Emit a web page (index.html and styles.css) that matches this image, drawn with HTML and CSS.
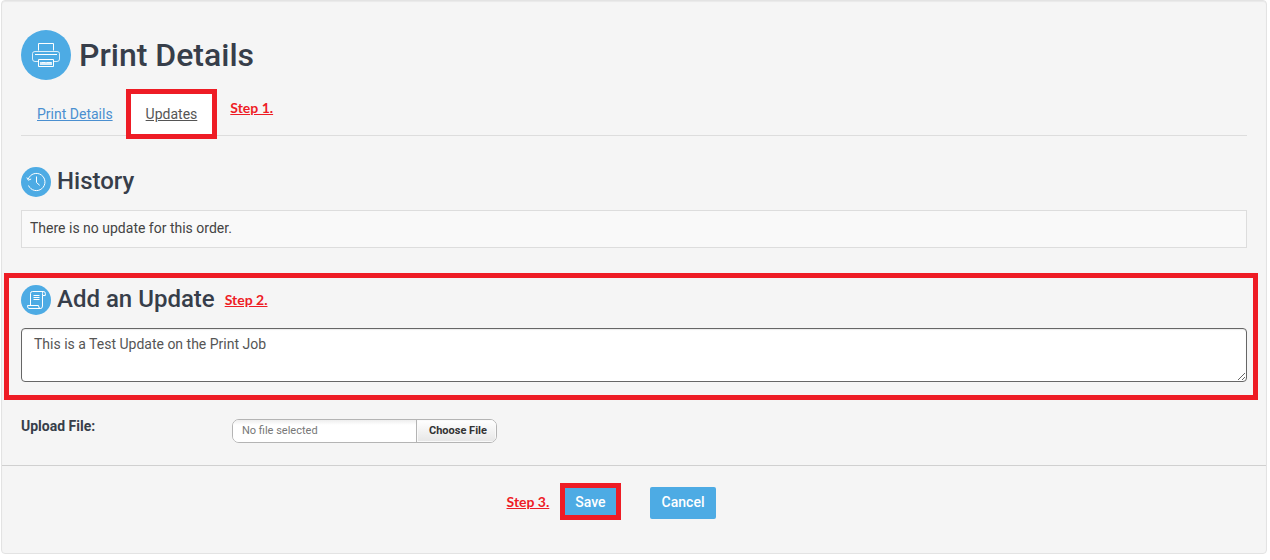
FILE: index.html
```html
<!DOCTYPE html>
<html lang="en">
<head>
<meta charset="utf-8">
<title>Print Details</title>
<link rel="stylesheet" href="styles.css">
</head>
<body>
<form class="panel">
  <div class="panel-body">
    <header class="page-head">
      <svg class="icon-large" viewBox="0 0 50 50" aria-hidden="true">
        <circle class="disc" cx="25" cy="25" r="25"/>
        <g class="lines">
          <path d="M17.500 20.500V13.500H32.500V20.500"/>
          <path class="soft" d="M17.500 31.500H14Q11.500 31.500 11.500 29V23.500Q11.500 21.500 14 21.500H36Q38.500 21.500 38.500 23.500V29Q38.500 31.500 36 31.500H32.500"/>
          <path d="M14 24.500H36"/>
          <path d="M17.500 29.500H32.500V36.500H17.500Z"/>
          <path class="thick" d="M19 33.500H31"/>
          <path class="soft" d="M21 32.500H24M26 32.500H30"/>
        </g>
      </svg>
      <h1>Print Details</h1>
    </header>

    <nav class="tabs">
      <a class="tab" href="#details">Print Details</a>
      <a class="tab tab-active marked" href="#updates">Updates</a>
      <span class="step">Step 1.</span>
    </nav>

    <section class="history">
      <div class="section-head">
        <svg class="icon-small" viewBox="0 0 30 30" aria-hidden="true">
          <circle class="disc" cx="15" cy="15" r="15"/>
          <g class="lines">
            <path d="M7.300 12A8.600 8.600 0 1 1 7.500 18.500"/>
            <path d="M5.800 10.500L7.300 13.200L10.200 12"/>
            <path d="M15.500 9.500V15.500L18.700 18.300"/>
          </g>
        </svg>
        <h2>History</h2>
      </div>
      <p class="notice">There is no update for this order.</p>
    </section>

    <section class="add-update marked">
      <div class="section-head">
        <svg class="icon-small" viewBox="0 0 30 30" aria-hidden="true">
          <circle class="disc" cx="15" cy="15" r="15"/>
          <g class="lines">
            <path d="M9.500 20V8.500Q9.500 6.500 11.500 6.500H22.500Q24.300 6.500 24.300 8.300V10.500H21.500V8.500Q21.500 6.500 22.500 6.500M21.500 10.500V21Q21.500 23.500 19.500 23.500H8Q6.500 23.500 6.500 20.500H17.500Q17.500 23.500 19.500 23.500"/>
            <path d="M12.500 10.500H18.500M12.500 12.500H18.500M12.500 14.500H18.500"/>
          </g>
        </svg>
        <h2><label for="update">Add an Update</label></h2>
        <span class="step">Step 2.</span>
      </div>
      <textarea id="update" class="update-text">This is a Test Update on the Print Job</textarea>
    </section>

    <div class="upload-row">
      <label class="upload-label" for="file">Upload File:</label>
      <div class="uploader">
        <span class="file-name">No file selected</span>
        <span class="file-action">Choose File</span>
        <input class="file-input" id="file" type="file">
      </div>
    </div>
  </div>

  <footer class="actions">
    <span class="step">Step 3.</span>
    <button class="button button-save marked" type="button">Save</button>
    <button class="button" type="button">Cancel</button>
  </footer>
</form>
</body>
</html>
```

FILE: styles.css
```css
* {
  box-sizing: border-box;
}

body {
  margin: 0 3px 0 1px;
  background: #fff;
  color: #444;
  font: 14px/20px Roboto, sans-serif;
}

.panel {
  border: 1px solid #e3e3e3;
  border-radius: 4px;
  background: #f5f5f5;
  box-shadow: inset 0 1px 1px rgba(0, 0, 0, 0.05);
}

.panel-body {
  padding: 29px 19px 22px;
}

h1,
h2,
p {
  margin: 0;
}

h1,
h2 {
  color: #373e4a;
  font-weight: 500;
}

h1 {
  font-size: 32px;
  line-height: 50px;
}

h2 {
  font-size: 24px;
  line-height: 30px;
}

.marked {
  border: 5px solid #ee1c25;
}

.step {
  color: #ee1c25;
  font: bold 14px/20px Lato, sans-serif;
  text-decoration: underline;
}

.disc {
  fill: #4dabe4;
}

.lines {
  fill: none;
  stroke: #fff;
  stroke-width: 1;
}

.thick {
  stroke-width: 3;
  stroke-opacity: 0.8;
}

.soft {
  stroke-opacity: 0.8;
}

.page-head {
  display: flex;
  gap: 8px;
}

.icon-large {
  width: 50px;
  height: 50px;
}

.icon-small {
  width: 30px;
  height: 30px;
}

.tabs {
  display: flex;
  height: 56px;
  padding: 9px 0 0 16px;
  border-bottom: 1px solid #ddd;
}

.tabs .step {
  padding-top: 9px;
}

.tab {
  height: 50px;
  padding: 15px 0;
  color: #4a8fd0;
}

.tab-active {
  margin: 0 13px;
  padding: 10px 15px;
  background: #fff;
  color: #555;
}

.history {
  padding-top: 31px;
}

.section-head {
  display: flex;
  gap: 6px;
}

.section-head .step {
  padding: 5px 0 0 4px;
}

.section-head h2 {
  margin-top: -1px;
}

.notice {
  margin-top: 13px;
  padding: 7px 8px 9px;
  border: 1px solid #ddd;
  background: #f9f9f9;
}

.add-update {
  margin: 25px -11px 0 -17px;
  padding: 7px 6px 13px 12px;
}

.update-text {
  display: block;
  width: 100%;
  height: 54px;
  margin-top: 13px;
  padding: 5px 12px;
  border: 1px solid #666;
  border-radius: 4px;
  background: #fff;
  box-shadow: inset 0 1px 1px rgba(0, 0, 0, 0.08);
  color: #555;
  font: inherit;
  resize: vertical;
}

.upload-row {
  display: flex;
  align-items: flex-start;
  padding-top: 16px;
}

.upload-label {
  width: 211px;
  color: #373e4a;
  font-weight: bold;
}

.uploader {
  position: relative;
  display: flex;
  width: 265px;
  margin-top: 3px;
  overflow: hidden;
  border: 1px solid #b4b4b4;
  border-radius: 7px;
  background: #fff;
  font-size: 11px;
  line-height: 22px;
}

.file-name {
  flex: 1;
  padding-left: 9px;
  background: linear-gradient(#eee, #fff 5px);
  color: #777;
}

.file-action {
  width: 80px;
  padding-left: 12px;
  border-left: 1px solid #b4b4b4;
  background: linear-gradient(#fff, #e6e6e6);
  box-shadow: inset 0 0 0 1px #fafafa;
  color: #333;
  font-weight: bold;
}

.file-input {
  position: absolute;
  inset: 0;
  width: 100%;
  opacity: 0;
}

.actions {
  display: flex;
  justify-content: center;
  align-items: flex-start;
  padding: 17px 45px 33px 0;
  border-top: 1px solid #d0d0d0;
}

.actions .step {
  margin: 9px 11px 0 0;
}

.button {
  height: 32px;
  margin-top: 4px;
  padding: 0 12px 2px;
  border: 0;
  border-radius: 2px;
  background: #4dabe4;
  color: #fff;
  font: 500 14px/20px Roboto, sans-serif;
}

.button-save {
  height: 37px;
  margin: 0 29px 0 0;
  padding: 0 10px;
  border: 5px solid #ee1c25;
  border-radius: 0;
}
```
